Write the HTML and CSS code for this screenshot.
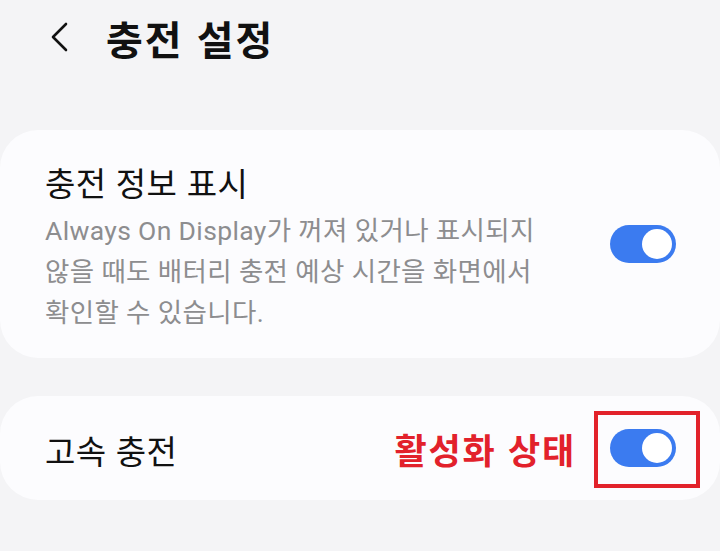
FILE: index.html
```html
<!DOCTYPE html>
<html lang="ko">
<head>
<meta charset="utf-8">
<link rel="stylesheet" href="styles.css">
</head>
<body>
<header class="topbar">
  <svg class="back" width="20" height="30" viewBox="0 0 20 30"><path d="M17 2 L4 15 L17 28" fill="none" stroke="#111" stroke-width="2.6" stroke-linecap="round" stroke-linejoin="round"/></svg>
  <h1 class="page-title">충전 설정</h1>
</header>
<main class="list">
  <section class="card card-info">
    <div class="text">
      <div class="item-title">충전 정보 표시</div>
      <div class="item-desc">Always On Display가 꺼져 있거나 표시되지<br>않을 때도 배터리 충전 예상 시간을 화면에서<br>확인할 수 있습니다.</div>
    </div>
    <span class="switch"><span class="knob"></span></span>
  </section>
  <section class="card card-fast">
    <div class="item-title fast-title">고속 충전</div>
    <span class="note">활성화 상태</span>
    <span class="switch-wrap">
      <span class="switch"><span class="knob"></span></span>
      <span class="highlight"></span>
    </span>
  </section>
</main>
</body>
</html>
```
FILE: styles.css
```css
html, body {
  margin: 0;
  padding: 0;
}
body {
  width: 720px;
  height: 551px;
  background: #f4f4f6;
  font-family: "Roboto", "Noto Sans CJK KR", sans-serif;
  overflow: hidden;
}
.topbar {
  display: flex;
  align-items: center;
  height: 76px;
  padding-left: 49px;
}
.back {
  display: block;
  margin-top: -2px;
}
.page-title {
  margin: 0 0 0 37px;
  font-family: "Noto Sans CJK KR", sans-serif;
  font-size: 40px;
  font-weight: 700;
  color: #111;
  letter-spacing: 2px;
}
.list {
  display: flex;
  flex-direction: column;
  gap: 38px;
  margin-top: 54px;
}
.card {
  background: #fcfcfe;
  border-radius: 38px;
  display: flex;
  align-items: center;
  padding: 0 44px 0 45px;
}
.card-info {
  height: 228px;
}
.card-fast {
  height: 104px;
}
.text {
  flex: 1;
  margin-top: 6px;
}
.item-title {
  font-family: "Noto Sans CJK KR", sans-serif;
  font-size: 33px;
  color: #111;
  line-height: 40px;
  letter-spacing: 0.3px;
}
.item-desc {
  margin-top: 8px;
  font-size: 26.5px;
  line-height: 41px;
  color: #8d8d8f;
  letter-spacing: 0.35px;
}
.fast-title {
  flex: 1;
  margin-top: 4px;
}
.note {
  font-family: "Noto Sans CJK KR", sans-serif;
  font-size: 35px;
  font-weight: 700;
  color: #e2212b;
  margin-right: 34px;
  letter-spacing: 1.8px;
}
.switch-wrap {
  position: relative;
  display: flex;
}
.switch {
  position: relative;
  display: block;
  width: 66px;
  height: 38px;
  border-radius: 19px;
  background: #3b7bf0;
}
.knob {
  position: absolute;
  right: 4px;
  top: 4px;
  width: 30px;
  height: 30px;
  border-radius: 50%;
  background: #fff;
}
.highlight {
  position: absolute;
  left: -16px;
  top: -18px;
  width: 98px;
  height: 69px;
  border: 4px solid #e2222a;
}
```
